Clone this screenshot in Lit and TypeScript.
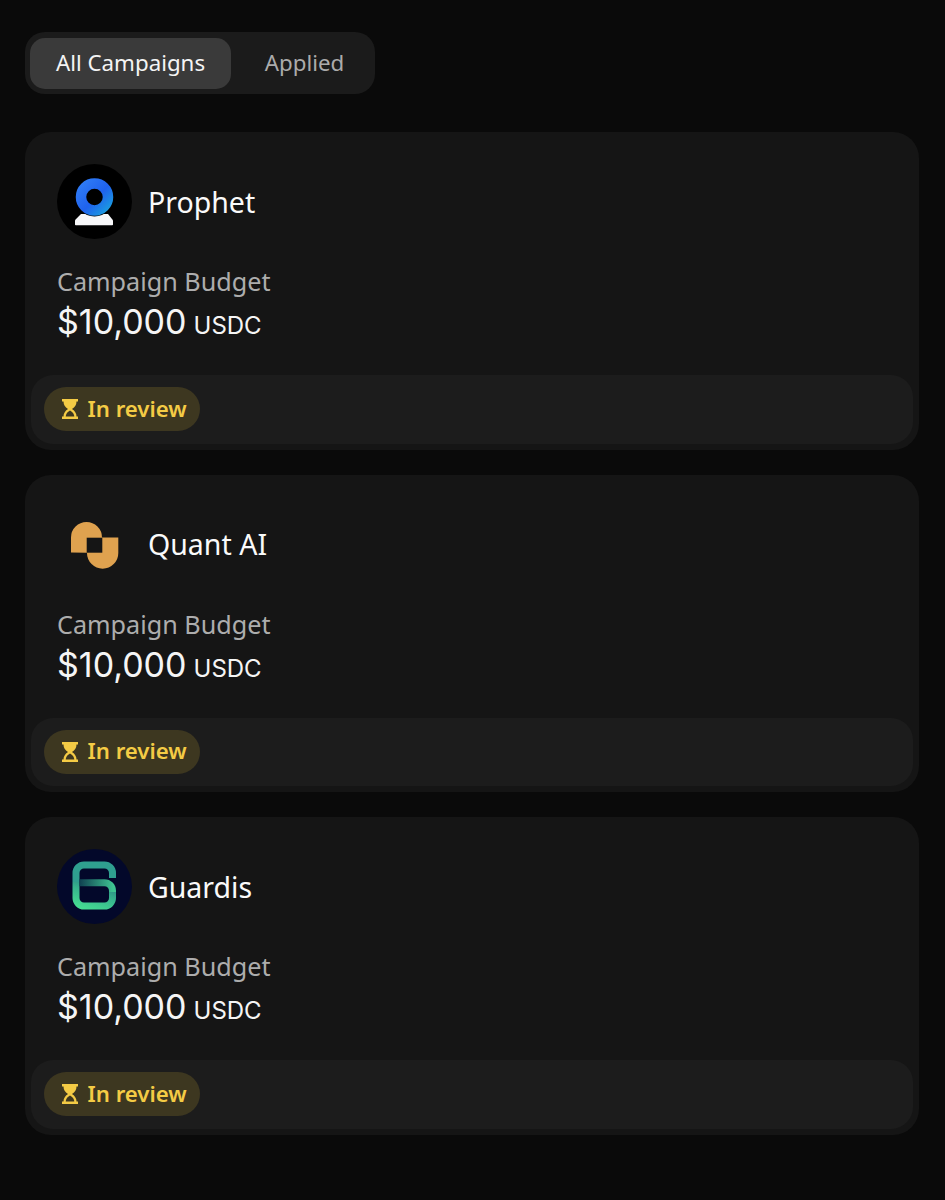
import { LitElement, css, html, svg } from "lit";
import { customElement, property, state } from "lit/decorators.js";

const prophetLogo = svg`
  <defs>
    <linearGradient id="ring" x1="0" y1="0" x2="1" y2="1">
      <stop offset="0" stop-color="#2f7bf5" />
      <stop offset="0.55" stop-color="#1f62ee" />
      <stop offset="1" stop-color="#1b9be0" />
    </linearGradient>
  </defs>
  <circle cx="37.5" cy="37.5" r="37.5" fill="#000" />
  <path d="M18 60.500V57q0-1 .8-1.800L24 50h27l4.200 5.200q.8.800.8 1.800v3.500q0 .8-.8.8H18.800q-.8 0-.8-.8z" fill="#f7f7f9" />
  <circle cx="37.500" cy="33" r="19.500" fill="#000" />
  <circle cx="37.500" cy="33" r="13.500" fill="none" stroke="url(#ring)" stroke-width="10.500" />
`;

const quantLogo = svg`
  <path d="M14 45.500V30.500a15.500 15.500 0 0 1 31 0v15.500z" fill="#dfa24f" />
  <path d="M30 30.500H61.300V46a15.600 15.600 0 0 1-31.300 0z" fill="#dfa24f" />
  <rect x="29.700" y="30.700" width="15.600" height="15" fill="#151515" />
`;

const guardisLogo = svg`
  <defs>
    <linearGradient id="guard" x1="0" y1="1" x2="0.5" y2="0">
      <stop offset="0" stop-color="#45dc92" />
      <stop offset="0.6" stop-color="#37b58d" />
      <stop offset="1" stop-color="#2b8c85" />
    </linearGradient>
    <linearGradient id="guardBar" gradientUnits="userSpaceOnUse" x1="22" y1="0" x2="56" y2="0">
      <stop offset="0" stop-color="#0f3f50" />
      <stop offset="1" stop-color="#3ec391" />
    </linearGradient>
  </defs>
  <circle cx="37.500" cy="37.500" r="37.500" fill="#03082a" />
  <path d="M19 33V24a8 8 0 0 1 8-8H47.500a8 8 0 0 1 8 8V29" fill="none" stroke="#2f9f8f" stroke-width="7" />
  <path d="M19 33V49a8 8 0 0 0 8 8H47.500a8 8 0 0 0 8-8V42" fill="none" stroke="url(#guard)" stroke-width="7" />
  <path d="M22.500 33.700H47.500a8 8 0 0 1 8 8V43" fill="none" stroke="url(#guardBar)" stroke-width="7" />
`;

const campaigns = [
  { name: "Prophet", logo: prophetLogo },
  { name: "Quant AI", logo: quantLogo },
  { name: "Guardis", logo: guardisLogo },
];

@customElement("app-root")
export class AppRoot extends LitElement {
  static styles = css`
    :host {
      display: block;
      min-height: 1200px;
      box-sizing: border-box;
      padding: 32px 26px 0 25px;
      background: #0a0a0a;
      font-family: "Noto Sans", sans-serif;
      color: #fff;
    }

    .tabs {
      display: inline-flex;
      box-sizing: border-box;
      width: 350px;
      height: 62px;
      padding: 6px 5px 5px;
      background: #1b1b1b;
      border-radius: 20px;
      margin-bottom: 38px;
      vertical-align: top;
    }

    .tab {
      display: flex;
      align-items: center;
      justify-content: center;
      padding: 0 0 2px 8px;
      font-size: 22.3px;
      color: #ababab;
      flex: 1;
    }

    .tab.active {
      flex: none;
      box-sizing: border-box;
      padding-left: 0;
      width: 201px;
      color: #f4f4f4;
      border-radius: 15px;
      background: #3a3a3a;
    }

    .list {
      display: flex;
      flex-direction: column;
      gap: 25px;
    }

    .card {
      display: flex;
      flex-direction: column;
      box-sizing: border-box;
      height: 317.5px;
      padding: 6px;
      background: #151515;
      border-radius: 26px;
    }

    .body {
      flex: 1;
      padding: 26px 26px 0;
    }

    .head {
      display: flex;
      align-items: center;
      gap: 16px;
    }

    .logo {
      width: 75px;
      height: 75px;
      flex: none;
      display: block;
    }

    .name {
      font-size: 28.5px;
      color: #fafafa;
    }

    .label {
      margin-top: 25px;
      height: 35px;
      line-height: 35px;
      font-size: 25.2px;
      color: #adadad;
    }

    .amount {
      display: flex;
      align-items: baseline;
      gap: 7px;
      height: 46px;
      line-height: 46px;
      font-family: Inter, sans-serif;
      font-size: 34px;
      font-weight: 400;
      color: #f5f5f5;
    }

    .amount small {
      font-size: 24px;
      font-weight: 400;
    }

    .foot {
      display: flex;
      align-items: center;
      height: 68.5px;
      padding: 0 12.5px;
      box-sizing: border-box;
      background: #1c1c1c;
      border-radius: 22px;
    }

    .badge {
      display: flex;
      align-items: center;
      gap: 9px;
      box-sizing: border-box;
      width: 156.5px;
      height: 44px;
      padding-left: 17px;
      background: #3d3720;
      border-radius: 22px;
      font-size: 22.2px;
      font-weight: 600;
      color: #f4cb45;
    }

    .badge span {
      margin-bottom: 2px;
    }

    .badge svg {
      width: 18px;
      height: 22px;
      flex: none;
    }
  `;

  @property({ type: Array })
  items = campaigns;

  @state()
  private tab = "all";

  private renderCard(item: (typeof campaigns)[number]) {
    return html`<div class="card">
      <div class="body">
        <div class="head">
          <svg class="logo" viewBox="0 0 75 75">${item.logo}</svg>
          <div class="name">${item.name}</div>
        </div>
        <div class="label">Campaign Budget</div>
        <div class="amount">$10,000 <small>USDC</small></div>
      </div>
      <div class="foot">
        <div class="badge">
          <svg viewBox="0 0 18 22">
            <path d="M1 1h16v2.500h-1.500q0 4.500-4.500 7.500 4.500 3 4.500 7.500H17V21H1v-2.500h1.500q0-4.500 4.500-7.500-4.500-3-4.500-7.500H1z" fill="#f4cb45" />
            <path d="M4.700 18.500q.3-4 4.300-6 4 2 4.300 6z" fill="#3d3720" />
          </svg>
          <span>In review</span>
        </div>
      </div>
    </div>`;
  }

  render() {
    return html`
      <div class="tabs">
        <div class="tab ${this.tab === "all" ? "active" : ""}">All Campaigns</div>
        <div class="tab ${this.tab === "applied" ? "active" : ""}">Applied</div>
      </div>
      <div class="list">${this.items.map((item) => this.renderCard(item))}</div>
    `;
  }
}
